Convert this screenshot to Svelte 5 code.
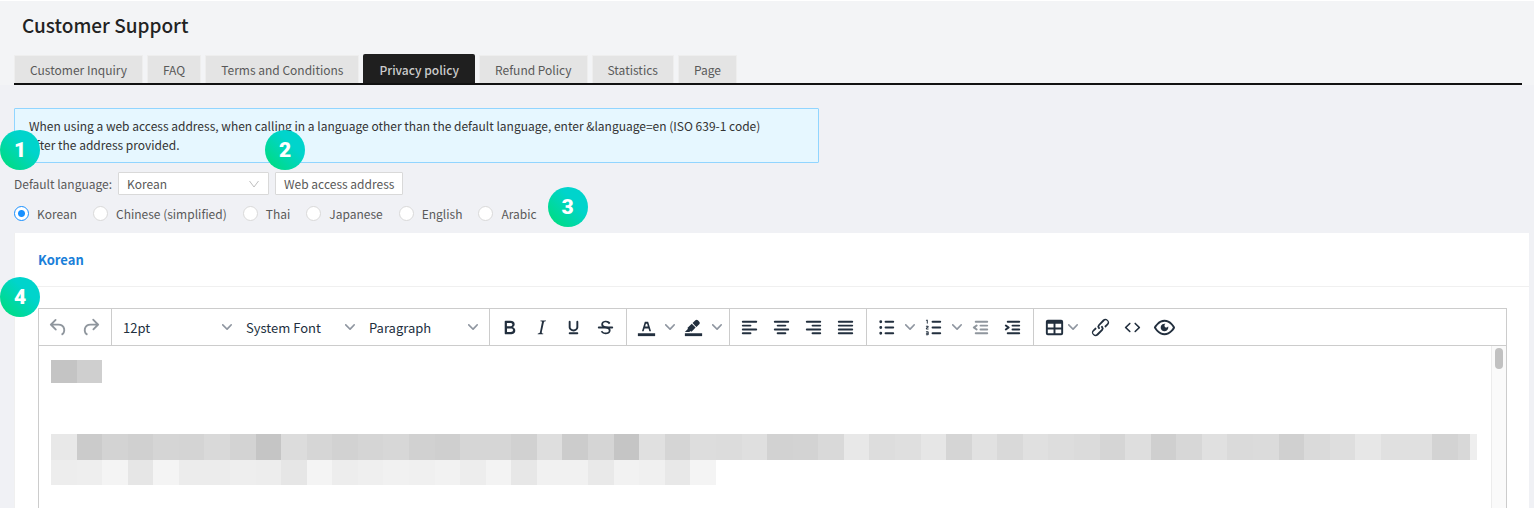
<script>
  const tabs = ['Customer Inquiry', 'FAQ', 'Terms and Conditions', 'Privacy policy', 'Refund Policy', 'Statistics', 'Page'];
  const languages = ['Korean', 'Chinese (simplified)', 'Thai', 'Japanese', 'English', 'Arabic'];
  let activeTab = $state('Privacy policy');
  let language = $state('Korean');
  let defaultLanguage = $state('Korean');

  const line = (x1, x2, y) => `M${x1} ${y - 1}H${x2}a1 1 0 010 2H${x1}a1 1 0 010-2z`;
  const icons = {
    undo: 'M6.4 8H12c3.7 0 6.2 2 6.8 5.1.6 2.7-.4 5.6-2.3 6.8a1 1 0 01-1-1.8c1.1-.6 1.8-2.7 1.4-4.6-.5-2.1-2.1-3.5-4.9-3.5H6.4l3.3 3.3a1 1 0 11-1.4 1.4l-5-5a1 1 0 010-1.4l5-5a1 1 0 011.4 1.4L6.4 8z',
    redo: 'M17.6 10H12c-2.8 0-4.4 1.4-4.9 3.5-.4 2 .3 4 1.4 4.6a1 1 0 11-1 1.8c-2-1.2-2.9-4.1-2.3-6.8.6-3 3-5.1 6.8-5.1h5.6l-3.3-3.3a1 1 0 111.4-1.4l5 5a1 1 0 010 1.4l-5 5a1 1 0 01-1.4-1.4l3.3-3.3z',
    bold: 'M7.8 19c-.3 0-.5 0-.6-.2l-.2-.5V5.7c0-.2 0-.4.2-.5l.6-.2h5c1.5 0 2.7.3 3.5 1 .7.6 1.1 1.4 1.1 2.5a3 3 0 01-.6 1.9c-.4.6-1 1-1.6 1.2.4.1.9.3 1.3.6s.8.7 1 1.2c.4.4.5 1 .5 1.6 0 1.3-.4 2.3-1.3 3-.8.7-2.1 1-3.8 1H7.8zm5-8.3c.6 0 1.2-.1 1.6-.5.4-.3.6-.7.6-1.3 0-1.1-.8-1.7-2.3-1.7H9.3v3.5h3.4zm.5 6c.7 0 1.3-.1 1.7-.4.4-.4.6-.9.6-1.5s-.2-1-.7-1.4c-.4-.3-1-.4-2-.4H9.4v3.8h4z',
    italic: 'M16.7 4.7l-.1.9h-.3c-.6 0-1 0-1.4.3-.3.3-.4.6-.5 1.1l-2.1 9.8v.6c0 .5.4.8 1.4.8h.2l-.2.8H8l.2-.8h.2c1.1 0 1.8-.5 2-1.5l2-9.8.1-.5c0-.6-.4-.8-1.4-.8h-.3l.2-.9h5.8z',
    underline: 'M16 5c.6 0 1 .4 1 1v5.5a4 4 0 01-.4 1.8l-1 1.4a5.3 5.3 0 01-5.5 1 5 5 0 01-1.6-1c-.5-.4-.8-.9-1.1-1.4a4 4 0 01-.4-1.8V6c0-.6.4-1 1-1s1 .4 1 1v5.5c0 .3 0 .6.2 1l.6.7a3.3 3.3 0 002.2.8 3.4 3.4 0 002.2-.8c.3-.2.4-.5.6-.8l.2-.9V6c0-.6.4-1 1-1zM8 17h8c.6 0 1 .4 1 1s-.4 1-1 1H8a1 1 0 010-2z',
    strike: 'M15.6 8.5c-.5-.7-1-1.1-1.3-1.3-.6-.4-1.3-.6-2-.6-2.7 0-2.8 1.7-2.8 2.1 0 1.6 1.8 2 3.2 2.3 4.4.9 4.6 2.8 4.6 3.9 0 1.4-.7 4.1-5 4.1A6.2 6.2 0 017 16.4l1.5-1.1c.4.6 1.6 2 3.7 2 1.6 0 2.5-.4 3-1.2.4-.8.3-2-.8-2.6-.7-.4-1.6-.7-2.9-1-1-.2-3.9-.8-3.9-3.6C7.6 6 10.3 5 12.4 5c2.9 0 4.2 1.6 4.7 2.4l-1.5 1.1z|M5 11h14a1 1 0 010 2H5a1 1 0 010-2z',
    color: 'M3 18h18v3H3z|M8.7 16h-.8a.5.5 0 01-.5-.6l2.7-9c.1-.3.3-.4.5-.4h2.8c.2 0 .4.1.5.4l2.7 9a.5.5 0 01-.5.6h-.8a.5.5 0 01-.4-.4l-.7-2.2c0-.3-.3-.4-.5-.4h-3.4c-.2 0-.4.1-.5.4l-.7 2.2c0 .3-.2.4-.4.4zm2.6-7.6l-.6 2a.5.5 0 00.5.6h1.6a.5.5 0 00.5-.6l-.6-2c0-.3-.3-.4-.5-.4h-.4c-.2 0-.4.1-.5.4z',
    highlight: 'M3 18h18v3H3z|M7.7 16.7H3l3.3-3.3-.7-.8L10.2 8l4 4.1-4 4.2c-.2.2-.6.2-.8 0l-.6-.7-1.1 1.1zm5-7.5L11 7.4l3-2.9a2 2 0 012.6 0L18 6c.7.7.7 2 0 2.7l-2.9 2.9-1.8-1.8-.5-.6z',
    left: [line(5, 19, 6), line(5, 13, 10), line(5, 19, 14), line(5, 13, 18)].join('|'),
    center: [line(5, 19, 6), line(8, 16, 10), line(5, 19, 14), line(8, 16, 18)].join('|'),
    right: [line(5, 19, 6), line(11, 19, 10), line(5, 19, 14), line(11, 19, 18)].join('|'),
    justify: [line(5, 19, 6), line(5, 19, 10), line(5, 19, 14), line(5, 19, 18)].join('|'),
    bullets: [line(11, 19, 6), line(11, 19, 12), line(11, 19, 18), 'M4.5 6a1.5 1.5 0 103 0 1.5 1.5 0 10-3 0zM4.5 12a1.5 1.5 0 103 0 1.5 1.5 0 10-3 0zM4.5 18a1.5 1.5 0 103 0 1.5 1.5 0 10-3 0z'].join('|'),
    numbers: [line(11, 19, 6), line(11, 19, 12), line(11, 19, 18), 'M6 4v3.5c0 .3-.2.5-.5.5a.5.5 0 01-.5-.5V5h-.5a.5.5 0 010-1H6zm-1 8.8l.2.2h1.3c.3 0 .5.2.5.5s-.2.5-.5.5H4.9a1 1 0 01-.9-1V13c0-.4.3-.8.6-1l1.2-.4.2-.3a.2.2 0 00-.2-.2H4.5a.5.5 0 01-.5-.5c0-.3.2-.5.5-.5h1.6c.5 0 .9.4.9 1v.1c0 .4-.3.8-.6 1l-1.2.4-.2.3zM7 17v2c0 .6-.4 1-1 1H4.5a.5.5 0 010-1h1.2c.2 0 .3-.1.3-.3 0-.2-.1-.3-.3-.3H4.4a.4.4 0 110-.8h1.3c.2 0 .3-.1.3-.3 0-.2-.1-.3-.3-.3H4.5a.5.5 0 110-1H6c.6 0 1 .4 1 1z'].join('|'),
    outdent: [line(7, 19, 6), line(12, 19, 10), line(12, 19, 14), line(7, 19, 18), 'M8.6 13.2a1 1 0 01-1.2 1.6l-3-2a1 1 0 010-1.6l3-2a1 1 0 011.2 1.6L6.8 12z'].join('|'),
    indent: [line(7, 19, 6), line(12, 19, 10), line(12, 19, 14), line(7, 19, 18), 'M4.4 13.2a1 1 0 101.2 1.6l3-2a1 1 0 000-1.6l-3-2a1 1 0 10-1.2 1.6L6.2 12z'].join('|'),
    table: 'M19 4a2 2 0 012 2v12a2 2 0 01-2 2H5a2 2 0 01-2-2V6c0-1.1.9-2 2-2h14zM5 14v4h6v-4H5zm14 0h-6v4h6v-4zm0-6h-6v4h6V8zM5 12h6V8H5v4z',
    link: 'M6.2 12.3a1 1 0 011.4 1.4l-2.1 2a2 2 0 102.7 2.8l4.8-4.8a1 1 0 000-1.4 1 1 0 111.4-1.3 2.9 2.9 0 010 4L9.6 20a3.9 3.9 0 01-5.5-5.5l2-2zm11.6-.6a1 1 0 01-1.4-1.4l2-2a2 2 0 10-2.6-2.8L11 10.3a1 1 0 000 1.4A1 1 0 119.6 13a2.9 2.9 0 010-4L14.4 4a3.9 3.9 0 015.5 5.5l-2 2z',
    code: 'M9.8 15.7c.3.3.3.8 0 1-.3.4-.9.4-1.2 0l-4.4-4.1a.8.8 0 010-1.2l4.4-4.2c.3-.3.9-.3 1.2 0 .3.3.3.8 0 1.1L6 12l3.8 3.7z|M14.2 15.7c-.3.3-.3.8 0 1 .4.4.9.4 1.2 0l4.4-4.1c.3-.3.3-.9 0-1.2l-4.4-4.2a.8.8 0 00-1.2 0c-.3.3-.3.8 0 1.1L18 12l-3.8 3.7z',
    preview: 'M3.5 12.5c.5.8 1.1 1.6 1.8 2.3 2 2 4.2 3.2 6.7 3.2s4.7-1.2 6.7-3.2a16.2 16.2 0 002.1-2.8 15.7 15.7 0 00-2.1-2.8c-2-2-4.2-3.2-6.7-3.2a9.3 9.3 0 00-6.7 3.2A16.2 16.2 0 003.2 12c0 .2.2.3.3.5zm-2.4-1l.7-1.2L4 7.8C6.2 5.4 8.9 4 12 4c3 0 5.8 1.4 8.1 3.8a18.2 18.2 0 012.8 3.7v1l-.7 1.2a18.2 18.2 0 01-2.1 2.5c-2.3 2.4-5 3.8-8.1 3.8-3 0-5.8-1.4-8.1-3.8a18.2 18.2 0 01-2.8-3.7 1 1 0 010-1zm12-3.3a2 2 0 102.7 2.6 4 4 0 11-2.6-2.6z',
  };

  const groups = [
    [{ icon: 'undo', off: true }, { icon: 'redo', off: true }],
    [{ text: '12pt', name: 'Font size' }, { text: 'System Font', name: 'Font' }, { text: 'Paragraph', name: 'Block style' }],
    [{ icon: 'bold' }, { icon: 'italic' }, { icon: 'underline' }, { icon: 'strike' }],
    [{ icon: 'color', split: true }, { icon: 'highlight', split: true }],
    [{ icon: 'left' }, { icon: 'center' }, { icon: 'right' }, { icon: 'justify' }],
    [{ icon: 'bullets', split: true }, { icon: 'numbers', split: true }, { icon: 'outdent', off: true }, { icon: 'indent' }],
    [{ icon: 'table', menu: true }, { icon: 'link' }, { icon: 'code' }, { icon: 'preview' }],
  ];

  // Grey levels of the redacted text, one hex byte per tile
  const redacted = [
    { y: 0, h: 23, tones: 'c4 cf' },
    { y: 74, h: 26, tones: 'e8 cb d3 d0 d5 d4 d9 d3 c5 dc d6 d2 d5 d7 d1 cf d6 d6 d1 de cc d5 c5 e0 d5 dd dc df d2 d3 d9 e8 dd df e6 d5 e1 d9 e0 dd db d5 de cf d7 e0 da db d0 da de e7 e0 e0 d3' },
    { y: 100, h: 25, tones: 'ed ee f4 e6 f4 ec ec ee ed e6 f4 ed ef f1 f0 f2 ed f3 e7 f1 f1 e9 f2 f0 e8 f4' },
  ];
  const edge = (i) => Math.round((i * 1381) / 54);
</script>

{#snippet chevron()}
  <svg class="chevron" viewBox="0 0 10 10" aria-hidden="true"><path d="M8.7 2.2c.3-.3.8-.3 1 0 .4.4.4.9 0 1.2L5.7 7.8c-.3.3-.9.3-1.2 0L.2 3.4a.8.8 0 010-1.2c.3-.3.8-.3 1.1 0L5 6l3.7-3.8z" /></svg>
{/snippet}

{#snippet glyph(name)}
  <svg class="icon" viewBox="0 0 24 24" aria-hidden="true">
    {#each icons[name].split('|') as d}<path {d} fill-rule="evenodd" />{/each}
  </svg>
{/snippet}

<div class="page">
  <header>
    <h1>Customer Support</h1>
    <nav>
      {#each tabs as tab}
        <button class="tab" class:active={tab === activeTab} onclick={() => (activeTab = tab)}>{tab}</button>
      {/each}
    </nav>
  </header>

  <main>
    <p class="notice">When using a web access address, when calling in a language other than the default language, enter &amp;language=en (ISO 639-1 code) after the address provided.</p>

    <div class="settings">
      <span class="badge first">1</span>
      <label for="default-language">Default language:</label>
      <div class="select">
        <select id="default-language" bind:value={defaultLanguage}>
          {#each languages as item}<option>{item}</option>{/each}
        </select>
        <svg viewBox="0 0 10 8" aria-hidden="true"><path d="M.5 1L5 7L9.500 1" /></svg>
      </div>
      <div class="anchor">
        <span class="badge second">2</span>
        <button class="address">Web access address</button>
      </div>
    </div>

    <div class="languages" role="radiogroup" aria-label="Language">
      {#each languages as item}
        <label><input type="radio" name="language" value={item} bind:group={language} />{item}</label>
      {/each}
      <div class="anchor"><span class="badge third">3</span></div>
    </div>

    <section class="card">
      <h2>{language}</h2>
      <div class="content">
        <span class="badge fourth">4</span>
        <div class="editor">
          <div class="toolbar" role="toolbar" aria-label="Formatting">
            {#each groups as group}
              <div class="group">
                {#each group as item}
                  {#if item.text}
                    <button class="picker" aria-label={item.name}><span>{item.text}</span>{@render chevron()}</button>
                  {:else if item.split}
                    <button class="tool" aria-label={item.icon}>{@render glyph(item.icon)}</button>
                    <button class="more" aria-label="{item.icon} options">{@render chevron()}</button>
                  {:else if item.menu}
                    <button class="tool menu" aria-label={item.icon}>{@render glyph(item.icon)}{@render chevron()}</button>
                  {:else}
                    <button class="tool" disabled={item.off} aria-label={item.icon}>{@render glyph(item.icon)}</button>
                  {/if}
                {/each}
              </div>
            {/each}
          </div>
          <div class="document">
            <div class="text">
              <svg width="1426" height="125" aria-hidden="true" shape-rendering="crispEdges">
                {#each redacted as row}
                  {#each row.tones.split(' ') as tone, i}
                    <rect x={edge(i)} y={row.y} width={edge(i + 1) - edge(i)} height={row.h} fill="#{tone}{tone}{tone}" />
                  {/each}
                {/each}
                <rect x="1407" y="74" width="12" height="26" fill="#d8d8d8" />
                <rect x="1419" y="74" width="7" height="26" fill="#eee" />
              </svg>
            </div>
            <div class="track"><div class="thumb"></div></div>
          </div>
        </div>
      </div>
    </section>
  </main>
</div>

<style>
  :global(body) { margin: 0; }
  .page, .page * { box-sizing: border-box; }
  .page {
    min-height: 100vh;
    display: flex;
    flex-direction: column;
    background: #f0f1f5;
    color: #595959;
    font: 12px/19px "Noto Sans CJK KR", "Noto Sans", sans-serif;
  }
  button, select { font: inherit; color: inherit; margin: 0; }
  header {
    border-top: 1px solid #fff;
    background: #f3f4f6;
    padding: 10px 12px 0 14px;
  }
  h1 {
    margin: 0 8px 15px;
    font-size: 19px;
    line-height: 28px;
    font-weight: 500;
    color: #222;
  }
  nav {
    display: flex;
    align-items: flex-end;
    gap: 4px;
    border-bottom: 2px solid #111;
  }
  .tab {
    height: 28px;
    padding: 0 15px;
    border: 1px solid #eee;
    border-bottom-width: 0;
    background: #e4e4e4;
    white-space: nowrap;
  }
  .tab.active {
    height: 29px;
    padding: 2px 16px 0;
    border: 0;
    border-radius: 2px 2px 0 0;
    background: #1f1f1f;
    color: #ccc;
    font-weight: 500;
  }
  main {
    flex: 1;
    display: flex;
    flex-direction: column;
    padding: 23px 5px 0 14px;
  }
  .notice {
    margin: 0;
    max-width: 805px;
    padding: 7px 36px 8px 14px;
    border: 1px solid #91d5ff;
    border-radius: 1px;
    background: #e6f7ff;
    color: #333;
  }
  .settings {
    position: relative;
    display: flex;
    align-items: center;
    gap: 6px;
    margin-top: 9px;
  }
  .select { position: relative; width: 151px; }
  select {
    display: block;
    width: 100%;
    height: 23px;
    padding: 0 8px;
    appearance: none;
    border: 1px solid #d9d9d9;
    border-radius: 1px;
    background: #fff;
  }
  .select svg {
    position: absolute;
    right: 10px;
    top: 8px;
    width: 10px;
    height: 8px;
    fill: none;
    stroke: #bfbfbf;
    pointer-events: none;
  }
  .anchor { position: relative; }
  .address {
    display: block;
    height: 23px;
    padding: 0 8px;
    border: 1px solid #d9d9d9;
    border-radius: 1px;
    background: #fff;
    line-height: 21px;
  }
  .languages {
    display: flex;
    align-items: center;
    gap: 16px;
    margin-top: 9px;
  }
  .languages label { display: flex; align-items: center; gap: 8px; }
  input {
    appearance: none;
    width: 15px;
    height: 15px;
    margin: 0;
    border: 1px solid #d9d9d9;
    border-radius: 50%;
    background: #fff;
  }
  input:checked {
    border-color: #1890ff;
    background: radial-gradient(circle, #1890ff 0 3px, #fff 4px);
  }
  .badge {
    position: absolute;
    z-index: 1;
    width: 40px;
    height: 40px;
    border-radius: 50%;
    background: linear-gradient(45deg, #00dc82 10%, #00d4cc 65%);
    color: #fff;
    font: 900 21px/40px Roboto, sans-serif;
    text-align: center;
  }
  .first { left: -14px; top: -42px; }
  .second { left: -10px; top: -42px; }
  .third { left: -5px; top: -27px; }
  .fourth { left: -15px; top: -10px; }
  .card {
    flex: 1;
    display: flex;
    flex-direction: column;
    margin-top: 10px;
    border-left: 1px solid #f0f0f0;
    background: #fff;
  }
  h2 {
    margin: 0;
    padding: 17px 23px;
    border-bottom: 1px solid #f0f0f0;
    color: #1a7fd9;
    font-size: 13px;
    line-height: 19px;
    font-weight: 700;
  }
  .content {
    position: relative;
    flex: 1;
    display: flex;
    padding: 21px 22px 0 23px;
  }
  .editor {
    flex: 1;
    min-width: 0;
    display: flex;
    flex-direction: column;
    border: 1px solid #ccc;
    border-bottom: 0;
  }
  .toolbar {
    display: flex;
    border-bottom: 1px solid #ccc;
    color: #222f3e;
    font-size: 13px;
  }
  .group {
    display: flex;
    align-items: center;
    height: 36px;
    padding: 0 5px 0 3px;
    border-right: 1px solid #ccc;
  }
  .group:last-child { border-right: 0; }
  .group button {
    display: flex;
    align-items: center;
    justify-content: center;
    height: 32px;
    padding: 0;
    border: 0;
    background: none;
  }
  .group .tool { width: 32px; }
  .group .more { width: 15px; }
  .group .menu { width: 47px; gap: 2px; }
  .group .picker { width: 123px; padding: 0 6px 0 8px; justify-content: space-between; }
  .icon { width: 23px; height: 23px; fill: #222f3e; }
  .tool:disabled .icon { opacity: 0.5; }
  .chevron { width: 10px; height: 10px; fill: #8f96a0; }
  .document { flex: 1; display: flex; }
  .text { flex: 1; min-width: 0; overflow: hidden; padding: 14px 12px 0; }
  .text svg { display: block; }
  .track {
    width: 15px;
    padding: 2px 2px 0 3px;
    border-left: 1px solid #ececec;
    background: #fafafa;
  }
  .thumb { width: 8px; height: 21px; border-radius: 4px; background: #c1c1c1; }
</style>
